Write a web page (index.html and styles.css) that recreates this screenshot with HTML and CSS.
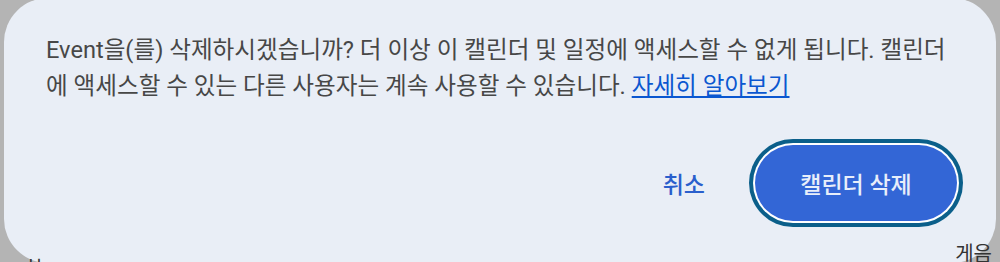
FILE: index.html
```html
<!DOCTYPE html>
<html lang="ko">
<head>
<meta charset="utf-8">
<link rel="stylesheet" href="styles.css">
</head>
<body>
<div class="backdrop">
  <span class="under under-left">치</span>
  <div class="dialog">
    <p class="message">Event을(를) 삭제하시겠습니까? 더 이상 이 캘린더 및 일정에 액세스할 수 없게 됩니다. 캘린더에 액세스할 수 있는 다른 사용자는 계속 사용할 수 있습니다. <a class="link" href="#">자세히 알아보기</a></p>
    <div class="actions">
      <button class="btn-text">취소</button>
      <button class="btn-filled">캘린더 삭제</button>
    </div>
  </div>
  <span class="under under-right">게음</span>
</div>
</body>
</html>
```
FILE: styles.css
```css
html, body {
  margin: 0;
  padding: 0;
  width: 1000px;
  height: 262px;
  overflow: hidden;
  background: #b4b4b4;
}
.backdrop {
  position: relative;
  width: 1000px;
  height: 262px;
  overflow: hidden;
  padding: 0 4px;
  box-sizing: border-box;
}
.dialog {
  margin-top: -2px;
  height: 265px;
  box-sizing: border-box;
  background: #e9eef6;
  border-radius: 44px;
  padding: 34px 39px 42px 42px;
  display: flex;
  flex-direction: column;
  font-family: Roboto, "Noto Sans CJK KR", sans-serif;
}
.message {
  margin: 0;
  font-size: 23.6px;
  line-height: 36px;
  color: #474747;
  width: 914px;
}
.link {
  color: #0b57d0;
  text-decoration: underline;
  text-underline-offset: 2px;
}
.actions {
  margin-top: auto;
  display: flex;
  justify-content: flex-end;
  align-items: center;
  gap: 26px;
}
.btn-text {
  font: 500 23px Roboto, "Noto Sans CJK KR", sans-serif;
  color: #2a5fcc;
  background: none;
  border: none;
  padding: 0 24px;
  height: 76px;
}
.btn-filled {
  font: 500 23px Roboto, "Noto Sans CJK KR", sans-serif;
  color: #e8eefa;
  background: #3366d6;
  border: none;
  border-radius: 38px;
  width: 202px;
  height: 76px;
  box-shadow: 0 0 0 2px #ffffff, 0 0 0 6px #0b5f8a;
}
.under {
  position: absolute;
  font-family: Roboto, "Noto Sans CJK KR", sans-serif;
  font-size: 20px;
  color: #333;
  line-height: 1;
}
.under-right {
  right: 8px;
  top: 244px;
}
.under-left {
  left: 24px;
  top: 259px;
}
```
